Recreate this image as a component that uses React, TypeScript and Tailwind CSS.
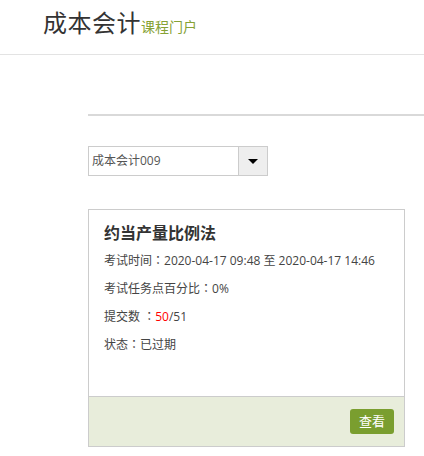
const font = "font-['Open_Sans','Noto_Sans_CJK_SC',sans-serif]"

// centred full-width colon, as in the screenshot's font
const Colon = () => <span className="font-['Noto_Sans_CJK_TC',sans-serif] leading-none">：</span>

export default function App() {
  return (
    <div className={`${font} min-h-[456px] bg-white text-[#333]`}>
      <header className="h-[55px] border-b border-[#e3e3e3] pl-[43px] pt-[9px]">
        <div className="flex items-baseline">
          <span className="text-[24px] leading-[28px] tracking-[0.5px] text-[#333]">成本会计</span>
          <span className="text-[14px] text-[#86a235]">课程门户</span>
        </div>
      </header>

      <main className="pl-[88px] pt-[59px]">
        <div className="h-[2px] bg-[#d9d9d9]" />

        <div className="mt-[30px] flex h-[30px] w-[180px] border border-[#cccccc]">
          <div className="flex flex-1 items-center pl-[3px] text-[12px] text-[#555]">成本会计009</div>
          <div className="flex w-[29px] items-center justify-center border-l border-[#cccccc] bg-[#eeeeee]">
            <span className="h-0 w-0 border-x-[5px] border-t-[5px] border-x-transparent border-t-black" />
          </div>
        </div>

        <div className="mt-[33px] w-[317px] border border-[#cccccc]">
          <div className="h-[186px] px-[15px] pt-[11px]">
            <h3 className="mb-[2px] text-[16px] font-bold leading-[24px] text-[#333]">约当产量比例法</h3>
            <p className="text-[12px] leading-[28px] text-[#444]">
              考试时间<Colon />2020-04-17 09:48 至 2020-04-17 14:46
            </p>
            <p className="text-[12px] leading-[28px] text-[#444]">
              考试任务点百分比<Colon />0%
            </p>
            <p className="text-[12px] leading-[28px] text-[#444]">
              提交数 <Colon /><span className="text-[#ff0000]">50</span>/51
            </p>
            <p className="text-[12px] leading-[28px] text-[#444]">
              状态<Colon />已过期
            </p>
          </div>
          <div className="flex h-[50px] items-center justify-end border-t border-[#cccccc] bg-[#e8eddb] pr-[10px]">
            <button className="h-[25px] w-[44px] rounded-[3px] bg-[#7a9e2f] text-[13px] text-white">查看</button>
          </div>
        </div>
      </main>
    </div>
  )
}
